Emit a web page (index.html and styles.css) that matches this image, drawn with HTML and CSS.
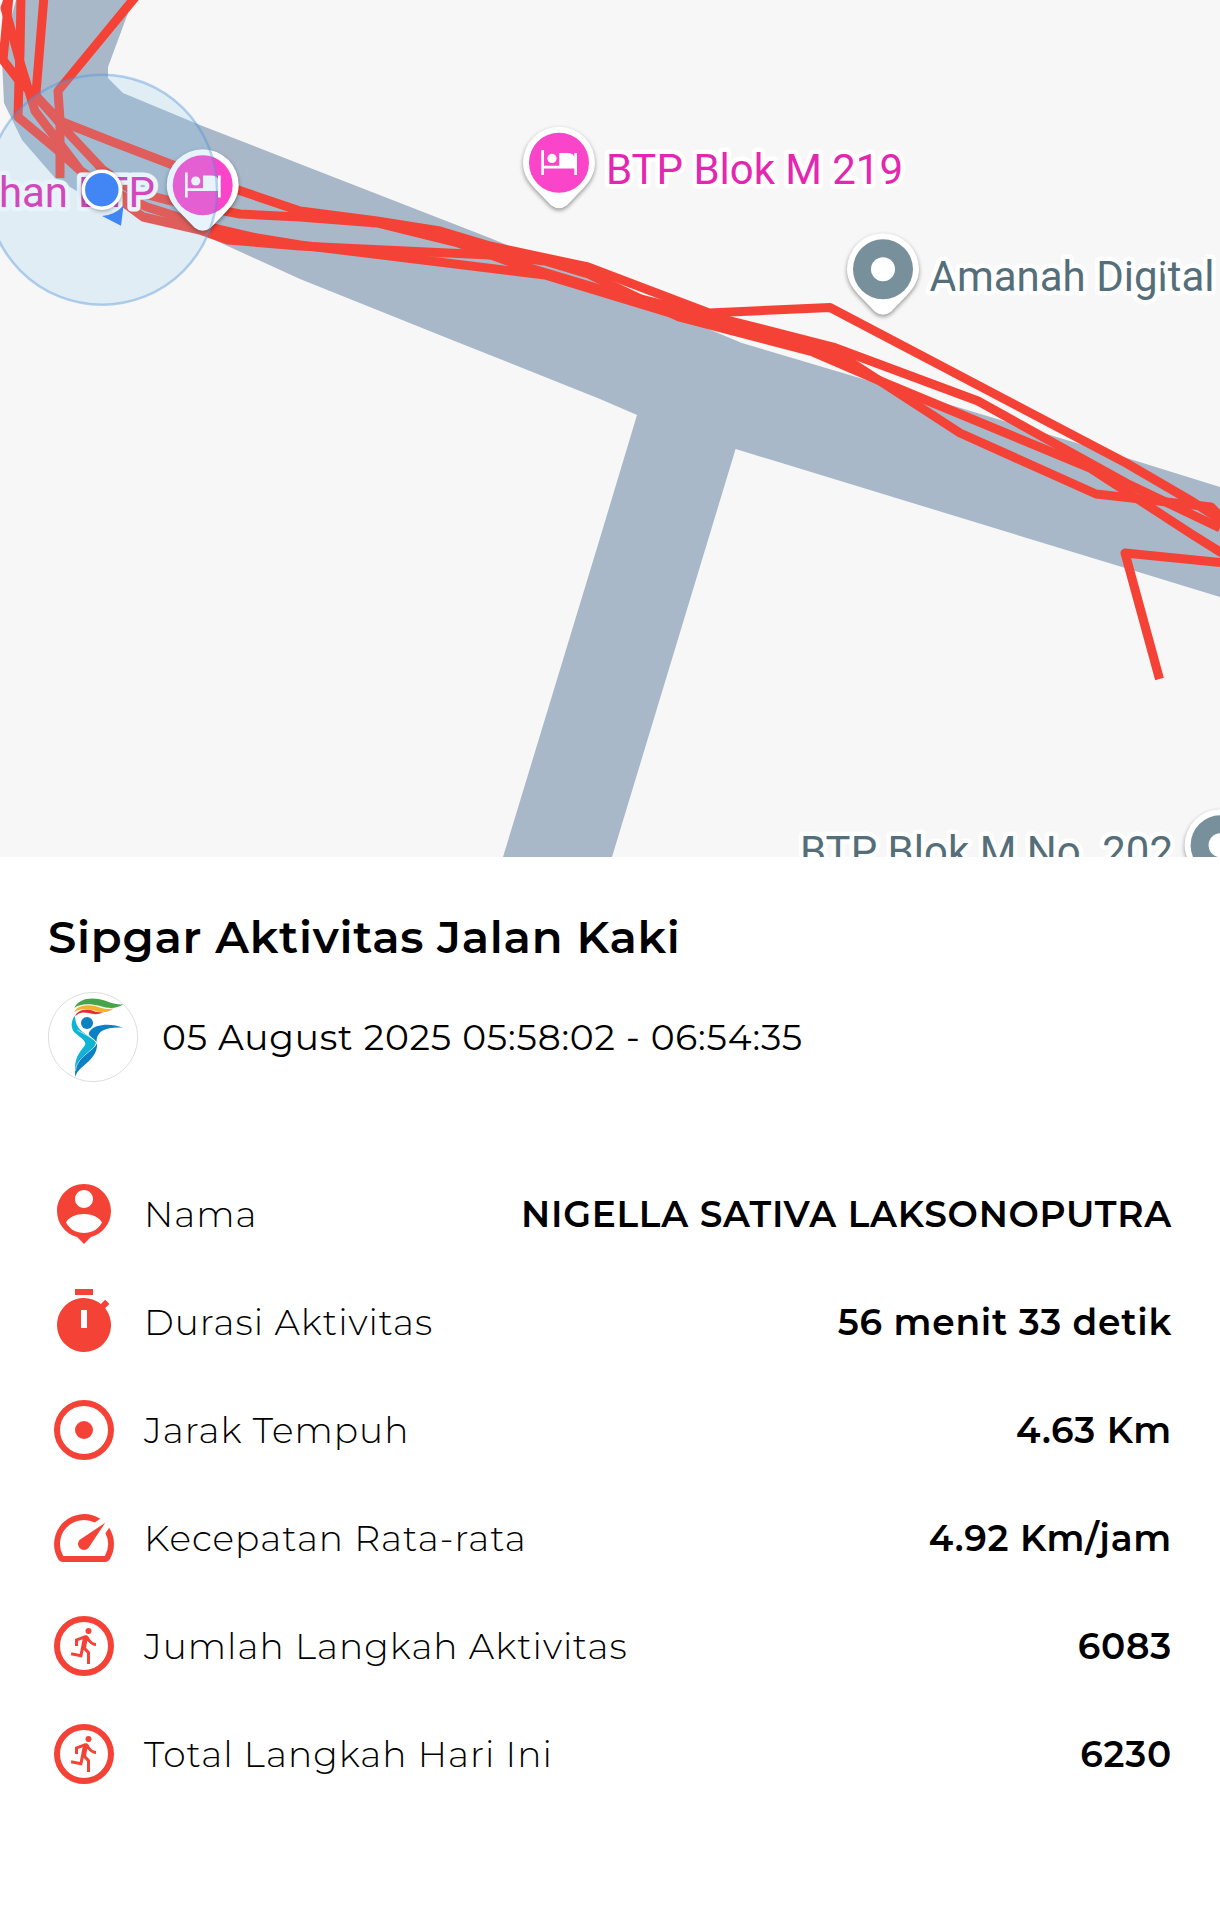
FILE: index.html
```html
<!DOCTYPE html>
<html lang="id">
<head>
    <meta charset="UTF-8">
    <meta name="viewport" content="width=device-width, initial-scale=1.0">
    <title>Sipgar Aktivitas Jalan Kaki</title>
    <link rel="stylesheet" href="styles.css">
</head>
<body>
    <svg class="map" viewBox="0 0 1220 857">
        <defs>
            <g id="pin">
                <path class="pin-body" d="M0 -36A36 36 0 0 1 36 0C36 12 29 21 22 28L8 42.500Q0 48.500 -8 42.500L-22 28C-29 21 -36 12 -36 0A36 36 0 0 1 0 -36Z"/>
            </g>
            <g id="bed" fill="#fff">
                <path d="M-17.700 -12.700h2.700V3H.3v-12.700H8q7.300 0 7.300 5V-9.700H18v22h-2.700V5.700H-15v6.600h-2.700z"/>
                <circle cx="-7" cy="-4.300" r="4.600"/>
            </g>
        </defs>

        <!-- jalan -->
        <path class="road" d="M16 0L9 25L2 60L4 103L22 140L55 178L80 193L210 238L300 279L452 340L600 399L637 415L600 538L503 857H612L735.600 449L1122 567L1220 597V487L1130 459L944 403L742 343L490 238L300 164L200 125L123 93L108 78V67L128 13L133 0Z"/>

        <!-- rute -->
        <g class="route">
            <path d="M9 -4L3 60L20 82L37 97L72 137L103 170L133 191L167 200L240 214L300 217L377 223L458 243L513 263L600 289L719 318L833 347L978 401L1126 483L1220 528"/>
            <path d="M12 -12L5 8L20 62L35 111L80 170L143 217L200 230L228 240L300 246L490 255L545 261L588 274L679 317L813 352L885 383L1090 468L1193 535L1225 555"/>
            <path d="M21 -4L20 53L19 80L18 117L55 148L83 173L110 190L147 207L213 228L257 238L300 245L545 275L680 316L843 357L960 433L1096 494L1211 507L1224 520"/>
            <path d="M44 -4L36 93L37 97"/>
            <path d="M137 -5L58 91L60 120L60 178"/>
            <path d="M37 97L60 121L113 142L173 165L238 190L300 211L377 221L440 231L490 246L588 267L709 313L830 307.500L1126 463L1193 502L1224 522"/>
            <path d="M1159.500 679L1125 553L1225 563"/>
        </g>

        <!-- tempat -->
        <text class="place pink" x="-1" y="206.500" textLength="156">han BTP</text>
        <g transform="translate(202.700 185.300)">
            <use href="#pin"/>
            <circle r="30" fill="#fa45ca"/>
            <use href="#bed"/>
        </g>

        <g transform="translate(559 162.700)">
            <use href="#pin"/>
            <circle r="30" fill="#fa45ca"/>
            <use href="#bed"/>
        </g>
        <text class="place pink" x="606" y="184" textLength="297">BTP Blok M 219</text>

        <g transform="translate(883 269.300)">
            <use href="#pin"/>
            <circle r="30" fill="#78909c"/>
            <circle r="12" fill="#fff"/>
        </g>
        <text class="place slate" x="929.500" y="291" textLength="285">Amanah Digital</text>

        <g transform="translate(1220.600 845.300)">
            <use href="#pin"/>
            <circle r="30" fill="#78909c"/>
            <circle r="12" fill="#fff"/>
        </g>
        <text class="place slate" x="800" y="866" textLength="373">BTP Blok M No. 202</text>

        <!-- posisi pengguna -->
        <circle class="accuracy" cx="102" cy="189.700" r="115"/>
        <path d="M102 216Q115 215 123.500 205.500L121 225.700Z" fill="#4285f4"/>
        <circle class="me" cx="101.800" cy="189.700" r="18.500"/>
    </svg>

    <main class="detail">
        <h1 class="title">Sipgar Aktivitas Jalan Kaki</h1>
        <div class="session">
            <svg class="avatar" viewBox="24 36 270 270">
                <circle cx="159" cy="171" r="134" fill="#fff" stroke="#bbb" stroke-width="1.500"/>
                <path fill="#43a548" d="M103 84C112 60 145 51 175 57C205 63 220 75 249 73C230 87 205 86 180 78C150 70 120 70 103 84Z"/>
                <path fill="#f2b02f" d="M103 97C108 78 140 72 165 78C190 85 200 90 221 85C205 99 185 99 165 92C140 84 118 86 103 97Z"/>
                <path fill="#e0312c" d="M106 109C108 94 135 84 155 91C167 96 175 98 189 96C175 105 160 103 145 99C125 95 115 99 106 109Z"/>
                <circle cx="141" cy="129" r="18" fill="#0b80c3"/>
                <path fill="#0fb4d4" d="M105 107C92 123 92 145 103 157C120 173 137 181 136 193C127 211 104 225 105 268L106 285C107 235 160 220 168 188C150 162 106 160 105 107Z"/>
                <path fill="#0b80c3" d="M249 143C215 130 165 130 148 155C141 167 160 173 170 187C169 173 174 160 187 152C205 142 230 141 249 143Z"/>
                <path fill="#0b80c3" d="M171 187C175 222 148 243 130 258C115 271 108 280 106 292C102 262 114 238 132 224C152 210 167 202 171 187Z"/>
                <path fill="none" stroke="#fff" stroke-width="2" d="M112 150C135 164 160 173 170 188C164 214 112 225 106 272"/>
            </svg>
            <span class="date">05 August 2025 05:58:02 - 06:54:35</span>
        </div>

        <ul class="stats">
            <li class="row">
                <svg class="icon" viewBox="0 0 24 24"><path d="M12 2c-4.970 0-9 4.030-9 9 0 4.170 2.840 7.670 6.690 8.690L12 22l2.310-2.310C18.160 18.670 21 15.170 21 11c0-4.970-4.030-9-9-9zm0 2c1.660 0 3 1.340 3 3s-1.340 3-3 3-3-1.340-3-3 1.340-3 3-3zm0 14.300c-2.500 0-4.710-1.160-6-3.500.9-1.700 3.400-2.800 6-2.800s5.100 1.100 6 2.800c-1.290 2.340-3.500 3.500-6 3.500z"/></svg>
                <span class="label">Nama</span>
                <span class="value">NIGELLA SATIVA LAKSONOPUTRA</span>
            </li>
            <li class="row">
                <svg class="icon" viewBox="0 0 24 24"><path d="M9 1h6v2H9z"/><path fill-rule="evenodd" d="M19.030 7.390l1.420-1.420c-.43-.51-.9-.99-1.410-1.410l-1.420 1.420A9 9 0 1 0 19.030 7.390zM13 14h-2V8h2z"/></svg>
                <span class="label">Durasi Aktivitas</span>
                <span class="value">56 menit 33 detik</span>
            </li>
            <li class="row">
                <svg class="icon" viewBox="0 0 24 24"><circle class="ring" cx="12" cy="12" r="9"/><circle cx="12" cy="12" r="3"/></svg>
                <span class="label">Jarak Tempuh</span>
                <span class="value">4.63 Km</span>
            </li>
            <li class="row">
                <svg class="icon" viewBox="0 0 24 24"><path d="M20.380 8.570l-1.230 1.850a8 8 0 0 1-.22 7.580H5.070A8 8 0 0 1 15.580 6.850l1.850-1.230A10 10 0 0 0 3.350 19a2 2 0 0 0 1.720 1h13.850a2 2 0 0 0 1.740-1 10 10 0 0 0-.27-10.440z"/><path d="M10.590 15.410a2 2 0 0 0 2.830 0l5.660-8.490-8.490 5.660a2 2 0 0 0 0 2.830z"/></svg>
                <span class="label">Kecepatan Rata-rata</span>
                <span class="value">4.92 Km/jam</span>
            </li>
            <li class="row">
                <svg class="icon" viewBox="0 0 24 24"><circle class="ring" cx="12" cy="12" r="9"/><circle cx="13.500" cy="7" r="1"/><path d="M16 12c-.7 0-2.010-.54-2.910-1.760l-.41 2.350L14 14.030V18h-1v-3.580l-1.110-1.210-.52 2.640L7.600 15.080l.2-.98 2.780.57.96-4.890L10 10.350V12H9V9.650l3.280-1.210c.49-.18 1.030.06 1.260.53C14.370 10.670 15.590 11 16 11z"/></svg>
                <span class="label">Jumlah Langkah Aktivitas</span>
                <span class="value">6083</span>
            </li>
            <li class="row">
                <svg class="icon" viewBox="0 0 24 24"><circle class="ring" cx="12" cy="12" r="9"/><circle cx="13.500" cy="7" r="1"/><path d="M16 12c-.7 0-2.010-.54-2.910-1.760l-.41 2.350L14 14.030V18h-1v-3.580l-1.110-1.210-.52 2.640L7.600 15.080l.2-.98 2.780.57.96-4.890L10 10.350V12H9V9.650l3.280-1.210c.49-.18 1.030.06 1.260.53C14.370 10.670 15.590 11 16 11z"/></svg>
                <span class="label">Total Langkah Hari Ini</span>
                <span class="value">6230</span>
            </li>
        </ul>
    </main>
</body>
</html>
```

FILE: styles.css
```css
:root {
    --red: #f44336;
    --road: #a9b8c9;
    --map-bg: #f7f7f7;
}

* {
    margin: 0;
    padding: 0;
    box-sizing: border-box;
}

body {
    width: 1220px;
    min-height: 1916px;
    background: #fff;
    color: #000;
    font-family: Montserrat, Inter, sans-serif;
    letter-spacing: 0.75px;
    overflow: hidden;
}

.map {
    display: block;
    width: 1220px;
    height: 857px;
    background: var(--map-bg);
    letter-spacing: 0;
}

.road {
    fill: var(--road);
}

.route path {
    fill: none;
    stroke: var(--red);
    stroke-width: 9;
    stroke-linejoin: round;
}

.pin-body {
    fill: #fff;
    filter: drop-shadow(0 2px 2px rgba(0, 0, 0, 0.4));
}

.place {
    font-family: Roboto, sans-serif;
    font-size: 42px;
    stroke: #fff;
    stroke-width: 9px;
    stroke-linejoin: round;
    paint-order: stroke;
}

.pink { fill: #e427b0; }
.slate { fill: #546e7a; }

.accuracy {
    fill: rgba(140, 198, 238, 0.2);
    stroke: rgba(74, 144, 217, 0.4);
    stroke-width: 2.5;
}

.me {
    fill: #4285f4;
    stroke: #fff;
    stroke-width: 3.5;
    filter: drop-shadow(0 1px 2px rgba(0, 0, 0, 0.35));
}

.detail {
    padding: 50px 48px 0;
}

.title {
    font-size: 45px;
    font-weight: 600;
    line-height: 60px;
    white-space: nowrap;
}

.session {
    display: flex;
    align-items: center;
    gap: 24px;
    margin-top: 25px;
}

.avatar {
    width: 90px;
    height: 90px;
}

.date {
    font-size: 36px;
    font-weight: 370;
    letter-spacing: 0.8px;
    white-space: nowrap;
}

.stats {
    display: flex;
    flex-direction: column;
    gap: 36px;
    margin-top: 96px;
    list-style: none;
}

.row {
    display: flex;
    align-items: center;
    height: 72px;
    font-size: 36px;
    white-space: nowrap;
}

.icon {
    width: 72px;
    height: 72px;
    margin-right: 24px;
    fill: var(--red);
}

.ring {
    fill: none;
    stroke: var(--red);
    stroke-width: 2;
}

.label {
    font-weight: 350;
    letter-spacing: 1px;
}

.value {
    margin-left: auto;
    font-weight: 600;
}
```
